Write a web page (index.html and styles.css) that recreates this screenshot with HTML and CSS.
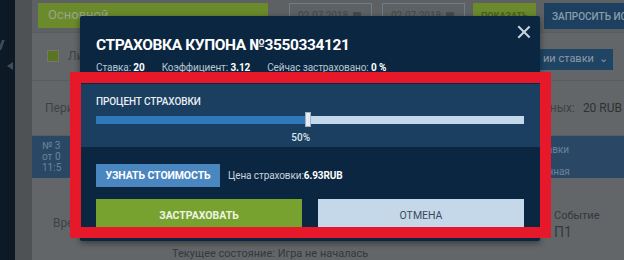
FILE: index.html
```html
<!DOCTYPE html>
<html lang="ru">
<head>
<meta charset="utf-8">
<title>Страховка купона</title>
<link rel="stylesheet" href="styles.css">
</head>
<body>
<div class="page">
  <aside class="sidebar">
    <span class="side-slash"></span>
    <span class="side-arrow"></span>
  </aside>
  <div class="gutter"></div>
  <main class="content">
    <div class="toolbar">
      <div class="select">Основной <span class="chev">⌄</span></div>
      <div class="date">02.07.2018 <span class="cal"></span></div>
      <div class="date">02.07.2018 <span class="cal"></span></div>
      <div class="btn-show">ПОКАЗАТЬ</div>
      <div class="btn-req">ЗАПРОСИТЬ ИСТ</div>
    </div>
    <div class="row row-filter">
      <span class="check"></span><span class="bg-text">Ли</span>
      <span class="spacer"></span>
      <div class="btn-type">ии ставки <span class="chev2">⌄</span></div>
    </div>
    <div class="row row-period">
      <span class="bg-text">Пери</span>
      <span class="spacer"></span>
      <span class="bg-text">анных:</span><span class="bg-val">20 RUB</span>
    </div>
    <div class="row row-head">
      <div class="head-left">№ 3<br>от 0<br>11:5</div>
      <span class="spacer"></span>
      <div class="head-right">тавки<br><br>очная</div>
    </div>
    <div class="row row-body">
      <span class="bg-text vre">Вре</span>
      <span class="spacer"></span>
      <div class="event"><span>Событие</span><span class="p1">П1</span></div>
    </div>
    <div class="state">Текущее состояние: Игра не началась</div>
  </main>
</div>

<div class="modal">
  <div class="modal-head">
    <h1 class="title">СТРАХОВКА КУПОНА №3550334121</h1>
    <div class="close"></div>
    <div class="stats">
      <span>Ставка: <b>20</b></span>
      <span>Коэффициент: <b>3.12</b></span>
      <span>Сейчас застраховано: <b>0 %</b></span>
    </div>
  </div>
  <div class="modal-range">
    <div class="label">ПРОЦЕНТ СТРАХОВКИ</div>
    <div class="track">
      <div class="fill" style="width:48.8%"></div>
      <div class="thumb"></div>
      <div class="rest"></div>
    </div>
    <div class="pct">50%</div>
  </div>
  <div class="modal-foot">
    <div class="price-row">
      <button class="btn-cost">УЗНАТЬ СТОИМОСТЬ</button>
      <span class="price">Цена страховки:<b>6.93RUB</b></span>
    </div>
    <div class="actions">
      <button class="btn-ok">ЗАСТРАХОВАТЬ</button>
      <button class="btn-cancel">ОТМЕНА</button>
    </div>
  </div>
</div>

<div class="highlight"></div>
</body>
</html>
```

FILE: styles.css
```css
* { box-sizing: border-box; }
html, body { margin: 0; padding: 0; }
body {
  width: 624px;
  height: 260px;
  overflow: hidden;
  font-family: Roboto, "Liberation Sans", sans-serif;
  background: #5e6163;
  position: relative;
}
.page {
  display: grid;
  grid-template-columns: 15px 17px minmax(0, 1fr);
  height: 260px;
}
.sidebar {
  background: #0d1924;
  position: relative;
}
.side-slash {
  position: absolute;
  left: 0; top: 40px;
  width: 3px; height: 10px;
  background: #3b4a58;
  transform: skewX(-20deg);
}
.side-arrow {
  position: absolute;
  left: 7px; top: 62px;
  width: 0; height: 0;
  border-top: 4px solid transparent;
  border-bottom: 4px solid transparent;
  border-right: 6px solid #3e4d5b;
}
.gutter { background: #4f5254; }
.content {
  background: #636668;
  display: flex;
  flex-direction: column;
  min-width: 0;
  overflow: hidden;
}
.toolbar {
  display: flex;
  align-items: flex-start;
  gap: 8px;
  height: 32px;
  padding: 3px 0 0 6px;
  background: #5e6163;
}
.select {
  width: 230px; height: 25px;
  flex-shrink: 0;
  background: #6a8a2b;
  color: #9aa58a;
  font-size: 13px;
  padding: 4px 0 0 10px;
  display: flex;
  justify-content: space-between;
}
.chev { color: #a0a890; padding-right: 14px; }
.date {
  width: 83px; height: 26px;
  flex-shrink: 0;
  margin-left: 13px;
  border: 1px solid #6e7d8a;
  color: #3d4850;
  font-size: 10px;
  padding: 6px 0 0 8px;
  display: flex;
  gap: 5px;
}
.date + .date { margin-left: 2px; }
.cal { width: 8px; height: 7px; background: #414a52; margin-top: 2px; border-radius: 1px; }
.btn-show {
  width: 63px; height: 26px;
  flex-shrink: 0;
  background: #6a8a2b;
  color: #4d5d2a;
  font-size: 9px;
  font-weight: 700;
  padding: 8px 0 0 8px;
}
.btn-req {
  flex: 1;
  min-width: 0;
  height: 26px;
  background: #1d4060;
  color: #8d9cab;
  font-size: 10px;
  font-weight: 500;
  padding: 8px 0 0 8px;
  white-space: nowrap;
  overflow: hidden;
}
.row {
  display: flex;
  align-items: center;
  border-top: 1px solid #5a5d5f;
}
.spacer { flex: 1; }
.row-filter { height: 48px; padding-left: 15px; }
.check {
  width: 12px; height: 12px;
  background: #5a7422;
  border: 1px solid #74776f;
  margin-right: 9px;
}
.bg-text { color: #3e4144; font-size: 12px; }
.btn-type {
  align-self: flex-start;
  width: 74px; height: 21px;
  background: #1f4464;
  color: #8e9aa6;
  font-size: 11px;
  padding: 3px 0 0 4px;
  margin-right: 11px;
  margin-top: 16px;
}
.chev2 { padding-left: 2px; }
.row-period { height: 56px; padding-left: 13px; }
.row-period .bg-val { color: #2e3134; font-size: 12px; margin: 0 2px 0 8px; }
.row-head {
  height: 43px;
  align-items: stretch;
}
.head-left {
  width: 48px;
  background: #2a4865;
  color: #6d8299;
  font-size: 10px;
  line-height: 11px;
  padding: 4px 0 0 10px;
}
.head-right {
  width: 84px;
  background: #2a4865;
  color: #6d8299;
  font-size: 10px;
  line-height: 11px;
  padding: 8px 0 0 2px;
}
.row-body { height: 64px; align-items: flex-start; padding-left: 21px; border-top: none; }
.vre { margin-top: 38px; }
.event {
  display: flex; flex-direction: column;
  width: 70px;
  margin-top: 31px;
  color: #35383b;
  font-size: 11px;
}
.event .p1 { font-size: 14px; margin-top: 2px; }
.state {
  padding-left: 140px;
  color: #35383b;
  font-size: 11px;
  margin-top: 5px;
}

/* modal */
.modal {
  position: absolute;
  left: 80px; top: 16px;
  width: 460px;
  height: 225px;
  background: #0b2640;
  box-shadow: 0 2px 6px rgba(0,0,0,.45);
  border-radius: 2px;
  color: #fff;
  display: flex;
  flex-direction: column;
}
.modal-head {
  position: relative;
  padding: 19px 16px 0 16px;
  height: 68px;
}
.title {
  margin: 0;
  font-size: 15.5px;
  font-weight: 700;
  line-height: 20px;
  letter-spacing: -0.4px;
}
.close {
  position: absolute;
  right: 9px; top: 9px;
  width: 14px; height: 14px;
}
.close::before, .close::after {
  content: "";
  position: absolute;
  left: 6px; top: -1px;
  width: 1.6px; height: 16px;
  background: #c9d3dd;
  transform: rotate(45deg);
}
.close::after { transform: rotate(-45deg); }
.stats {
  display: flex;
  gap: 17px;
  margin-top: 7px;
  font-size: 10px;
  letter-spacing: -0.1px;
  color: #b9c6d3;
}
.stats b { color: #fff; font-weight: 700; }
.modal-range {
  background: #1b3f60;
  height: 63px;
  padding: 11px 16px 0 16px;
}
.label {
  font-size: 10px;
  font-weight: 500;
  color: #e8eef4;
  line-height: 13px;
  letter-spacing: -0.1px;
}
.track {
  display: flex;
  align-items: center;
  height: 15px;
  margin-top: 4px;
}
.fill { height: 8px; background: #2f78b9; }
.thumb {
  width: 6px; height: 15px;
  background: #e4ebf1;
  border: 1px solid #9fb2c4;
}
.rest { flex: 1; height: 8px; background: #c3d8ea; }
.pct {
  width: 50%;
  text-align: right;
  font-size: 10px;
  font-weight: 500;
  color: #dde6ee;
  margin-top: 5px;
}
.modal-foot {
  flex: 1;
  padding: 17px 16px 0 16px;
}
.price-row {
  display: flex;
  align-items: center;
  gap: 8px;
}
button {
  font-family: inherit;
  border: none;
  cursor: pointer;
  padding: 0;
}
.btn-cost {
  width: 124px; height: 23px;
  background: #4a86bf;
  color: #fff;
  font-size: 10.5px;
  font-weight: 700;
  letter-spacing: -0.1px;
}
.price { font-size: 10px; color: #c9d4de; letter-spacing: -0.1px; }
.price b { color: #fff; }
.actions {
  display: flex;
  gap: 16px;
  margin-top: 12px;
}
.actions button {
  flex: 1;
  height: 32px;
  font-size: 10.5px;
}
.btn-ok { background: #77a22f; color: #eef4e4; font-weight: 700; }
.btn-cancel { background: #c4d8ea; color: #3a4a5a; font-weight: 400; font-size: 11px; }

.highlight {
  position: absolute;
  left: 70px; top: 72px;
  width: 481px; height: 166px;
  border: 11px solid #e8182b;
  border-radius: 1px;
}
```
